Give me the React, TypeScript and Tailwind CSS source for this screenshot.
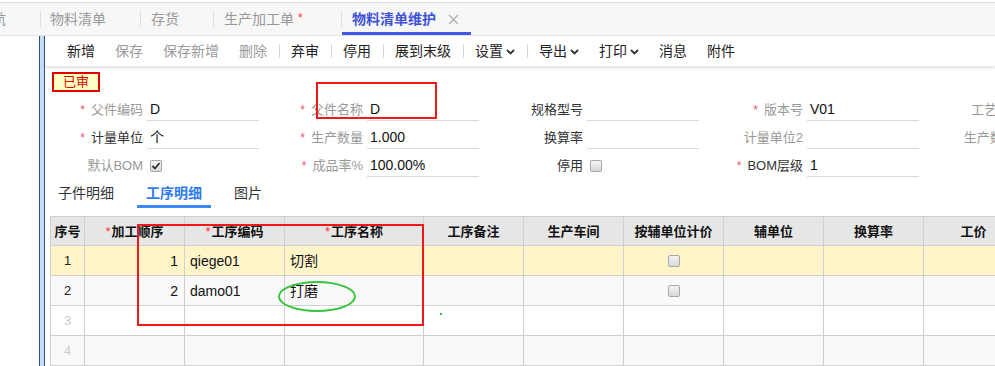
import React from "react";

const Chevron = () => (
  <svg width="9" height="6" viewBox="0 0 9 6" className="ml-[3px] mt-[1px]">
    <polyline points="1,1 4.5,4.5 8,1" fill="none" stroke="#333" strokeWidth="1.8" />
  </svg>
);

const Sep = () => <div className="w-px h-[14px] bg-[#d5d5d5] ml-[2px] mr-[1px]" />;

const TB = ({ t, dis, chev }: { t: string; dis?: boolean; chev?: boolean }) => (
  <div className={`px-[10px] flex items-center whitespace-nowrap ${dis ? "text-[#9a9a9a]" : "text-[#222]"}`}>
    {t}
    {chev && <Chevron />}
  </div>
);

const CheckBox = ({ checked }: { checked?: boolean }) => (
  <div className="w-[12px] h-[12px] rounded-[2px] border border-[#a8a8a8] bg-gradient-to-b from-[#f4f4f4] to-[#d8d8d8] flex items-center justify-center">
    {checked && (
      <svg width="10" height="10" viewBox="0 0 10 10">
        <polyline points="1.5,5 4,7.5 8.5,2" fill="none" stroke="#333" strokeWidth="1.8" />
      </svg>
    )}
  </div>
);

type F = { label: string; req?: boolean; dark?: boolean; value?: string; line?: boolean; cb?: "on" | "off"; lw?: number };

const Field = ({ label, req, dark, value, line = true, cb, lw = 108 }: F) => (
  <div className="flex items-end h-full shrink-0">
    <div
      className={`h-[22px] flex items-center justify-end pr-[4px] text-[13px] whitespace-nowrap ${dark ? "text-[#333]" : "text-[#999]"}`}
      style={{ width: lw }}
    >
      {req && <span className="text-[#f0506e] mr-[6px] text-[12px]">*</span>}
      {label}
    </div>
    <div className={`w-[112px] h-[22px] flex items-center pl-[3px] text-[14px] text-[#111] ${line ? "border-b border-[#d9d9d9]" : ""}`}>
      {cb ? <CheckBox checked={cb === "on"} /> : value}
    </div>
  </div>
);

const cols = ["序号", "*加工顺序", "*工序编码", "*工序名称", "工序备注", "生产车间", "按辅单位计价", "辅单位", "换算率", "工价"];

const rows = [
  { n: "1", o: "1", c: "qiege01", name: "切割", bg: "bg-[#fff5c8]", cb: true, dark: true },
  { n: "2", o: "2", c: "damo01", name: "打磨", bg: "bg-[#f9f9f9]", cb: true, dark: true },
  { n: "3", o: "", c: "", name: "", bg: "bg-white", cb: false, dark: false },
  { n: "4", o: "", c: "", name: "", bg: "bg-[#f9f9f9]", cb: false, dark: false },
];

export default function App() {
  return (
    <div className="relative w-[995px] h-[366px] overflow-hidden bg-white text-[#333] font-['Liberation_Sans','Noto_Sans_CJK_SC',sans-serif]">
      {/* Tab bar */}
      <div className="mt-[2px] h-[34px] border-t border-[#dcdcdc] border-b border-b-[#e4e4e4] bg-[#f7f7f7] flex items-stretch text-[14px] text-[#999] leading-none">
        <div className="w-[40px] flex items-center justify-end pr-[34px] whitespace-nowrap overflow-visible">导航</div>
        <div className="w-px h-[16px] self-center bg-[#dedede]" />
        <div className="w-[99px] flex items-center pl-[9px] whitespace-nowrap">物料清单</div>
        <div className="w-px h-[16px] self-center bg-[#dedede]" />
        <div className="w-[72px] flex items-center pl-[10px] whitespace-nowrap">存货</div>
        <div className="w-px h-[16px] self-center bg-[#dedede]" />
        <div className="w-[127px] flex items-center pl-[10px] whitespace-nowrap">
          生产加工单<span className="text-[#f33] ml-[4px] text-[12px] -mt-[3px]">*</span>
        </div>
        <div className="w-px h-[16px] self-center bg-[#dedede]" />
        <div className="w-[129px] flex items-center pl-[10px] whitespace-nowrap border-b-[3px] border-[#4257e6] pt-[3px] font-bold text-[#3f51d8]">
          物料清单维护
          <svg width="11" height="11" viewBox="0 0 11 11" className="ml-[12px]">
            <path d="M1 1 L10 10 M10 1 L1 10" stroke="#b0b0b0" strokeWidth="1.4" />
          </svg>
        </div>
      </div>

      {/* Body */}
      <div className="flex h-[330px]">
        <div className="w-[39px] shrink-0" />
        <div className="w-[6px] shrink-0 border-l border-r border-[#2a4f95] bg-[#c9dcf4]" />
        <div className="flex-1 flex flex-col min-w-0">
          {/* Toolbar */}
          <div className="h-[30px] shrink-0 flex items-center pl-[12px] text-[14px] leading-none shadow-[0_2px_3px_rgba(0,0,0,0.12)]">
            <TB t="新增" />
            <TB t="保存" dis />
            <TB t="保存新增" dis />
            <TB t="删除" dis />
            <Sep />
            <TB t="弃审" />
            <Sep />
            <TB t="停用" />
            <Sep />
            <TB t="展到末级" />
            <Sep />
            <TB t="设置" chev />
            <Sep />
            <TB t="导出" chev />
            <TB t="打印" chev />
            <TB t="消息" />
            <TB t="附件" />
          </div>

          {/* Status badge */}
          <div className="ml-[7px] mt-[6px] w-[48px] h-[20px] border-2 border-[#e00000] bg-[#ffffc4] text-[#e00000] text-[13px] leading-none flex items-center justify-center">
            已审
          </div>

          {/* Form rows */}
          <div className="mt-[1px] flex flex-col">
            <div className="h-[28px] flex whitespace-nowrap">
              <Field label="父件编码" req value="D" lw={102} />
              <Field label="父件名称" req value="D" />
              <Field label="规格型号" dark value="" />
              <Field label="版本号" req value="V01" />
              <Field label="工艺路线" value="" line={false} />
            </div>
            <div className="h-[28px] flex whitespace-nowrap">
              <Field label="计量单位" req dark value="个" lw={102} />
              <Field label="生产数量" req value="1.000" />
              <Field label="换算率" dark value="" />
              <Field label="计量单位2" value="" />
              <Field label="生产数量2" value="" line={false} />
            </div>
            <div className="h-[28px] flex whitespace-nowrap">
              <Field label="默认BOM" cb="on" line={false} lw={102} />
              <Field label="成品率%" req value="100.00%" />
              <Field label="停用" dark cb="off" line={false} />
              <Field label="BOM层级" req dark value="1" />
            </div>
          </div>

          {/* Sub tabs */}
          <div className="mt-[1px] h-[31px] flex gap-[13px] pl-[3px] text-[14px] leading-none">
            <div className="px-[10px] pt-[3px] flex items-center border-b-[3px] border-transparent text-[#333]">子件明细</div>
            <div className="px-[9px] pt-[3px] flex items-center border-b-[3px] border-[#3f86f5] text-[#2f7bf0] font-bold">工序明细</div>
            <div className="px-[10px] pt-[3px] flex items-center border-b-[3px] border-transparent text-[#333]">图片</div>
          </div>

          {/* Table */}
          <div className="mt-[8px] ml-[5px] w-max border-l border-t border-[#cfcfcf] grid grid-cols-[34px_100px_100px_139px_100px_100px_100px_100px_100px_100px] text-[13px] leading-none">
            {cols.map((c) => (
              <div key={c} className="h-[29px] border-r border-b border-[#cfcfcf] bg-[#e6e6e6] flex items-center justify-center font-bold text-[#111] whitespace-nowrap">
                {c.startsWith("*") ? (
                  <>
                    <span className="text-[#f33] font-normal mr-[1px]">*</span>
                    {c.slice(1)}
                  </>
                ) : (
                  c
                )}
              </div>
            ))}
            {rows.map((r) => (
              <React.Fragment key={r.n}>
                <div className={`h-[30px] border-r border-b border-[#cfcfcf] ${r.bg} flex items-center justify-center ${r.dark ? "text-[#222]" : "text-[#cccccc]"}`}>{r.n}</div>
                <div className={`h-[30px] border-r border-b border-[#cfcfcf] ${r.bg} flex items-center justify-end pr-[6px] text-[14px] text-[#111]`}>{r.o}</div>
                <div className={`h-[30px] border-r border-b border-[#cfcfcf] ${r.bg} flex items-center pl-[5px] text-[14px] text-[#111]`}>{r.c}</div>
                <div className={`h-[30px] border-r border-b border-[#cfcfcf] ${r.bg} flex items-center pl-[5px] text-[14px] text-[#111]`}>{r.name}</div>
                <div className={`h-[30px] border-r border-b border-[#cfcfcf] ${r.bg}`} />
                <div className={`h-[30px] border-r border-b border-[#cfcfcf] ${r.bg}`} />
                <div className={`h-[30px] border-r border-b border-[#cfcfcf] ${r.bg} flex items-center justify-center`}>
                  {r.cb && <CheckBox />}
                </div>
                <div className={`h-[30px] border-r border-b border-[#cfcfcf] ${r.bg}`} />
                <div className={`h-[30px] border-r border-b border-[#cfcfcf] ${r.bg}`} />
                <div className={`h-[30px] border-r border-b border-[#cfcfcf] ${r.bg}`} />
              </React.Fragment>
            ))}
          </div>
        </div>
      </div>

      {/* Annotations */}
      <div className="absolute left-[316px] top-[82px] w-[121px] h-[37px] border-2 border-[#f31818]" />
      <div className="absolute left-[137px] top-[224px] w-[287px] h-[102px] border-2 border-[#f31818]" />
      <div className="absolute left-[278px] top-[281px] w-[78px] h-[31px] border-2 border-[#33c43a] rounded-[50%]" />
      <div className="absolute left-[440px] top-[313px] w-[2px] h-[2px] bg-[#33c43a]" />
    </div>
  );
}
